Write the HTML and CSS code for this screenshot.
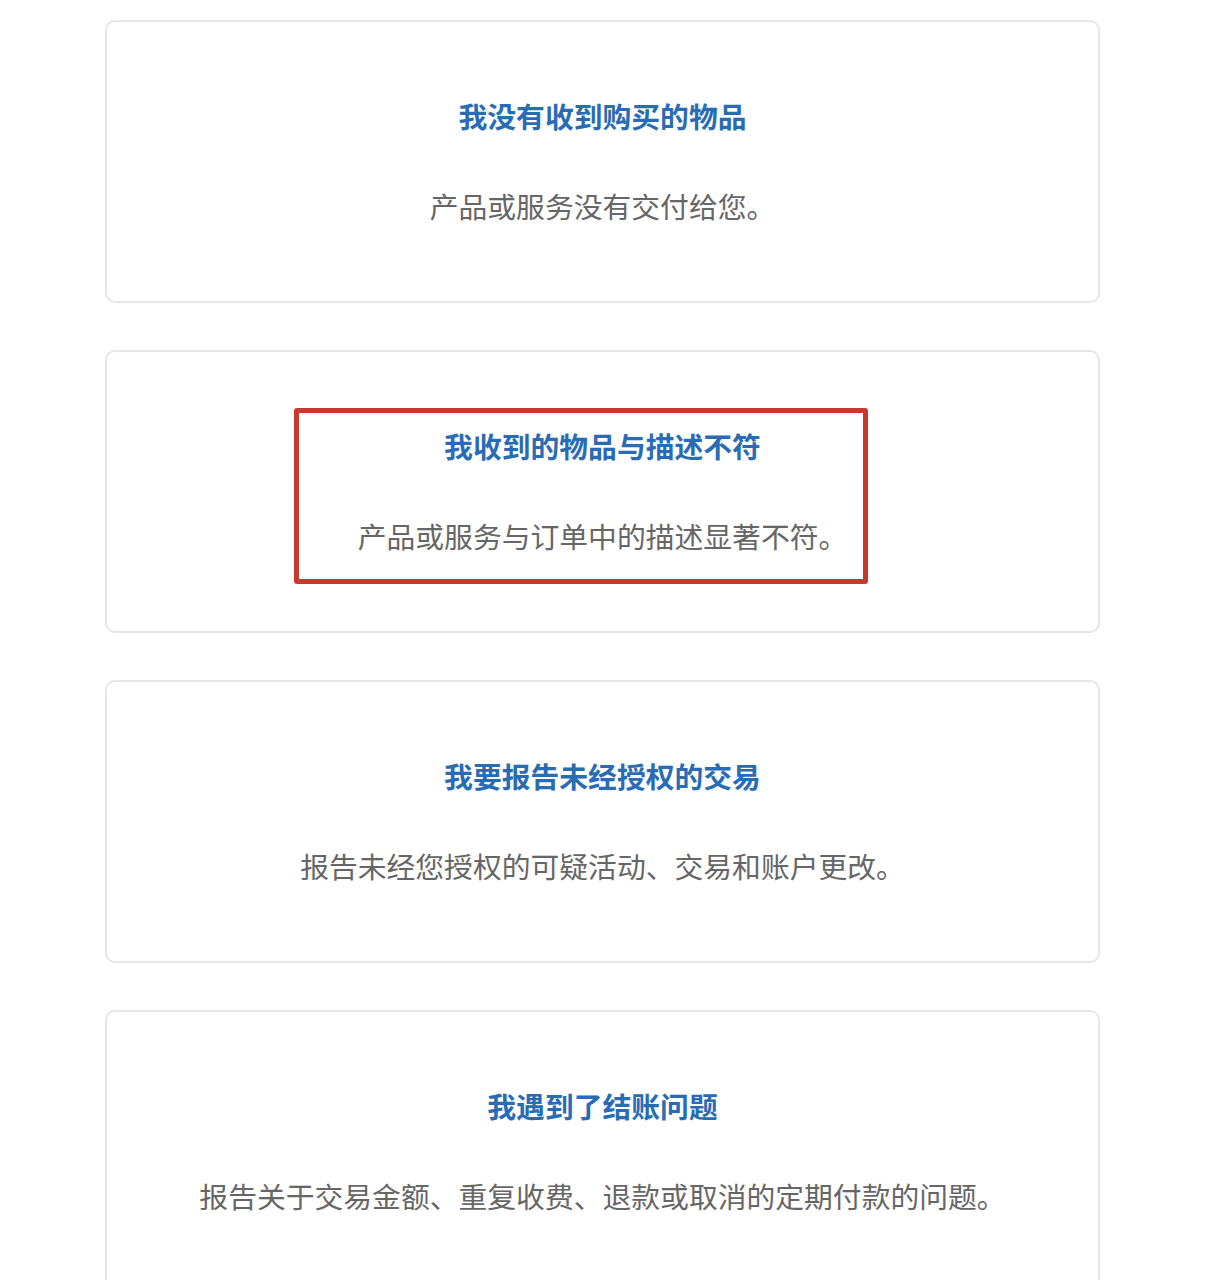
FILE: index.html
```
<!DOCTYPE html>
<html lang="zh-CN">
<head>
  <meta charset="UTF-8" />
  <meta name="viewport" content="width=device-width, initial-scale=1.0"/>
  <title>选择问题类型</title>
  <link rel="stylesheet" href="styles.css">
</head>
<body>
  <div class="issue-list">
    <div class="card">
      <h2>我没有收到购买的物品</h2>
      <p>产品或服务没有交付给您。</p>
    </div>
    <div class="card">
      <h2>我收到的物品与描述不符</h2>
      <p>产品或服务与订单中的描述显著不符。</p>
      <div class="highlight"></div>
    </div>
    <div class="card">
      <h2>我要报告未经授权的交易</h2>
      <p>报告未经您授权的可疑活动、交易和账户更改。</p>
    </div>
    <div class="card">
      <h2>我遇到了结账问题</h2>
      <p>报告关于交易金额、重复收费、退款或取消的定期付款的问题。</p>
    </div>
  </div>
</body>
</html>
```

FILE: styles.css
```
body {
  margin: 0;
  background: #fff;
  font-family: "Noto Sans CJK SC", "Noto Sans", sans-serif;
}
.issue-list {
  display: flex;
  flex-direction: column;
  gap: 47px;
  width: 995px;
  margin-left: 105px;
  padding-top: 20px;
}
.card {
  position: relative;
  border: 2px solid #e6e6e6;
  border-radius: 10px;
  padding: 74px 20px 75px;
  text-align: center;
}
.card h2 {
  margin: 0 0 50px;
  font-size: 28.8px;
  line-height: 40px;
  font-weight: 700;
  color: #2a6cb3;
}
.card p {
  margin: 0;
  font-size: 28.8px;
  line-height: 40px;
  color: #666;
}
.highlight {
  position: absolute;
  left: 187px;
  top: 56px;
  width: 564px;
  height: 166px;
  border: 5px solid #c9382d;
  border-radius: 3px;
}
```
